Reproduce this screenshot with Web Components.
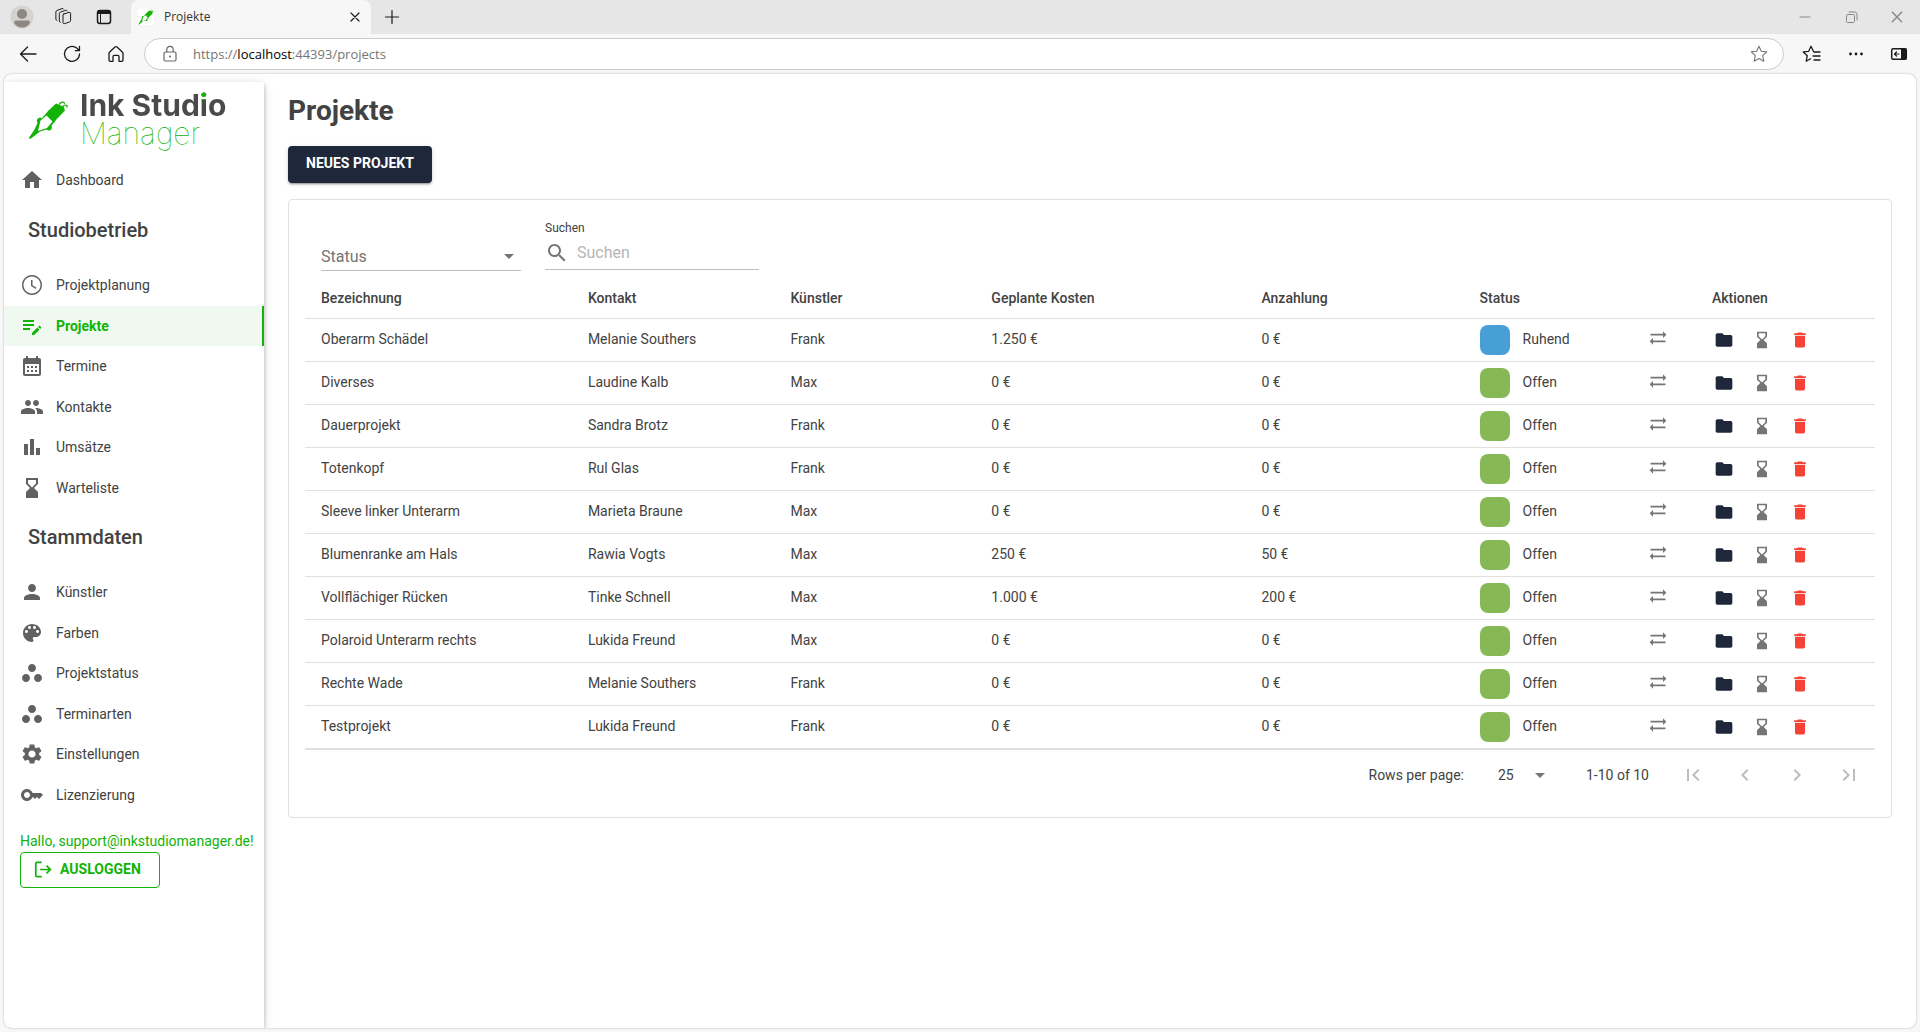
<!DOCTYPE html>
<html lang="de">
<head>
<meta charset="utf-8">
<title>Projekte</title>
<style>
html,body{margin:0;height:100%}
body{font-family:Roboto,"Liberation Sans",sans-serif;font-size:14px;line-height:20px;color:#424242;background:#f7f7f7}
</style>
</head>
<body>
<browser-window>
  <ink-sidebar slot="side"></ink-sidebar>
  <projects-page></projects-page>
</browser-window>
<script>
const BASE = `*{box-sizing:border-box}button,select,input{font:inherit;color:inherit;margin:0;padding:0;border:0;background:none;outline:0;border-radius:0;appearance:none}a{color:inherit;text-decoration:none}`;
function define(name, html, css) {
  const t = document.createElement('template');
  customElements.define(name, class extends HTMLElement {
    connectedCallback() {
      if (this.shadowRoot) return;
      const root = this.attachShadow({mode: 'open'});
      t.innerHTML = `<style>${BASE}${css}</style>${typeof html === 'function' ? html(this) : html}`;
      root.append(t.content.cloneNode(true));
    }
  });
}

/* ---------- icons ---------- */
const f = d => `<path fill="currentColor" d="${d}"/>`;
const s = (d, w = 1.2) => `<path fill="none" stroke="currentColor" stroke-width="${w}" stroke-linecap="round" stroke-linejoin="round" d="${d}"/>`;
const ICONS = {
  home: f('M10 20v-6h4v6h5v-8h3L12 3 2 12h3v8z'),
  clock: f('M11.99 2C6.47 2 2 6.48 2 12s4.47 10 9.99 10C17.52 22 22 17.52 22 12S17.52 2 11.99 2zM12 20.5c-4.7 0-8.5-3.8-8.5-8.5S7.3 3.5 12 3.5s8.5 3.8 8.5 8.5-3.8 8.5-8.5 8.5zM12.5 7H11v6l4.8 2.9.7-1.2-4-2.4z'),
  note: f('M3 10h11v2H3v-2zm0-2h11V6H3v2zm0 8h7v-2H3v2zm15.01-3.13.71-.71c.39-.39 1.02-.39 1.41 0l.71.71c.39.39.39 1.02 0 1.41l-.71.71-2.12-2.12zm-.71.71-5.3 5.3V21h2.12l5.3-5.3-2.12-2.12z'),
  calendar: f('M19 4h-1V2h-2v2H8V2H6v2H5c-1.11 0-1.99.9-1.99 2L3 20c0 1.1.89 2 2 2h14c1.1 0 2-.9 2-2V6c0-1.1-.9-2-2-2zm0 16H5V10h14v10zM9 14H7v-2h2v2zm4 0h-2v-2h2v2zm4 0h-2v-2h2v2zm-8 4H7v-2h2v2zm4 0h-2v-2h2v2zm4 0h-2v-2h2v2z'),
  people: f('M16 11c1.66 0 2.99-1.34 2.99-3S17.66 5 16 5s-3 1.34-3 3 1.34 3 3 3zm-8 0c1.66 0 2.99-1.34 2.99-3S9.66 5 8 5 5 6.34 5 8s1.34 3 3 3zm0 2c-2.33 0-7 1.17-7 3.5V19h14v-2.5c0-2.33-4.67-3.5-7-3.5zm8 0c-.29 0-.62.02-.97.05 1.16.84 1.97 1.97 1.97 3.45V19h6v-2.5c0-2.33-4.67-3.5-7-3.5z'),
  bars: f('M4 9h4v11H4zM10 4h4v16h-4zM16 13h4v7h-4z'),
  hourglass: f('M18 22l-.01-6L14 12l3.99-4.01L18 2H6v6l4 4-4 3.99V22h12zM8 7.5V4h8v3.5l-4 4-4-4z'),
  person: f('M12 12c2.21 0 4-1.79 4-4s-1.79-4-4-4-4 1.79-4 4 1.79 4 4 4zm0 2c-2.67 0-8 1.34-8 4v2h16v-2c0-2.66-5.33-4-8-4z'),
  palette: f('M12 3c-4.97 0-9 4.03-9 9s4.03 9 9 9c.83 0 1.5-.67 1.5-1.5 0-.39-.15-.74-.39-1.01-.23-.26-.38-.61-.38-.99 0-.83.67-1.5 1.5-1.5H16c2.76 0 5-2.24 5-5 0-4.42-4.03-8-9-8zm-5.5 9c-.83 0-1.5-.67-1.5-1.5S5.67 9 6.5 9 8 9.67 8 10.5 7.33 12 6.5 12zm3-4C8.67 8 8 7.33 8 6.5S8.67 5 9.5 5s1.5.67 1.5 1.5S10.33 8 9.5 8zm5 0c-.83 0-1.5-.67-1.5-1.5S13.67 5 14.5 5s1.5.67 1.5 1.5S15.33 8 14.5 8zm3 4c-.83 0-1.5-.67-1.5-1.5S16.67 9 17.5 9s1.5.67 1.5 1.5-.67 1.5-1.5 1.5z'),
  dots: f('M6 13c-2.2 0-4 1.8-4 4s1.8 4 4 4 4-1.8 4-4-1.8-4-4-4zm6-10C9.8 3 8 4.8 8 7s1.8 4 4 4 4-1.8 4-4-1.8-4-4-4zm6 10c-2.2 0-4 1.8-4 4s1.8 4 4 4 4-1.8 4-4-1.8-4-4-4z'),
  gear: f('M19.14 12.94c.04-.3.06-.61.06-.94 0-.32-.02-.64-.07-.94l2.03-1.58c.18-.14.23-.41.12-.61l-1.92-3.32c-.12-.22-.37-.29-.59-.22l-2.39.96c-.5-.38-1.03-.7-1.62-.94l-.36-2.54c-.04-.24-.24-.41-.48-.41h-3.84c-.24 0-.43.17-.47.41l-.36 2.54c-.59.24-1.13.57-1.62.94l-2.39-.96c-.22-.08-.47 0-.59.22L2.74 8.87c-.12.21-.08.47.12.61l2.03 1.58c-.05.3-.09.63-.09.94s.02.64.07.94l-2.03 1.58c-.18.14-.23.41-.12.61l1.92 3.32c.12.22.37.29.59.22l2.39-.96c.5.38 1.03.7 1.62.94l.36 2.54c.05.24.24.41.48.41h3.84c.24 0 .44-.17.47-.41l.36-2.54c.59-.24 1.13-.56 1.62-.94l2.39.96c.22.08.47 0 .59-.22l1.92-3.32c.12-.22.07-.47-.12-.61l-2.01-1.58zM12 15.6c-1.98 0-3.6-1.62-3.6-3.6s1.62-3.6 3.6-3.6 3.6 1.62 3.6 3.6-1.62 3.6-3.6 3.6z'),
  key: f('M21 10h-8.35C11.83 7.67 9.61 6 7 6c-3.31 0-6 2.69-6 6s2.69 6 6 6c2.61 0 4.83-1.67 5.65-4H13l2 2 2-2 2 2 4-4.04L21 10zM7 15c-1.65 0-3-1.35-3-3s1.35-3 3-3 3 1.35 3 3-1.35 3-3 3z'),
  logout: `<path fill="none" stroke="currentColor" stroke-width="2.2" d="M11 3H5Q3.5 3 3.5 4.5V19.5Q3.5 21 5 21H11M9 12H22M17 7l5 5-5 5"/>`,
  search: f('M15.5 14h-.79l-.28-.27C15.41 12.59 16 11.11 16 9.5 16 5.91 13.09 3 9.5 3S3 5.91 3 9.5 5.91 16 9.5 16c1.61 0 3.09-.59 4.23-1.57l.27.28v.79l5 4.99L20.49 19l-4.99-5zm-6 0C7.01 14 5 11.99 5 9.5S7.01 5 9.5 5 14 7.01 14 9.5 11.99 14 9.5 14z'),
  drop: f('M7 10l5 5 5-5z'),
  swap: f('M22 8l-4-4v3H3v2h15v3l4-4zM2 16l4 4v-3h15v-2H6v-3l-4 4z'),
  folder: f('M10 4H4c-1.1 0-1.99.9-1.99 2L2 18c0 1.1.9 2 2 2h16c1.1 0 2-.9 2-2V8c0-1.1-.9-2-2-2h-8l-2-2z'),
  trash: f('M6 19c0 1.1.9 2 2 2h8c1.1 0 2-.9 2-2V7H6v12zM19 4h-3.5l-1-1h-5l-1 1H5v2h14V4z'),
  first: f('M18.41 16.59L13.82 12l4.59-4.59L17 6l-6 6 6 6zM6 6h2v12H6z'),
  prev: f('M15.41 7.41L14 6l-6 6 6 6 1.41-1.41L10.83 12z'),
  next: f('M10 6L8.59 7.41 13.17 12l-4.58 4.59L10 18l6-6z'),
  last: f('M5.59 7.41L10.18 12l-4.59 4.59L7 18l6-6-6-6zM16 6h2v12h-2z'),
  /* window chrome, drawn on a 24 grid */
  avatar: '<circle cx="12" cy="12" r="11.5" fill="#d6d2ce"/><circle cx="12" cy="9" r="5" fill="#8c8782"/><path fill="#8c8782" d="M4 17.5Q4 15.5 6 15.5H18Q20 15.5 20 17.5C18.5 21 15.5 22.5 12 22.5S5.5 21 4 17.5z"/>',
  spaces: s('M12.8 9l5.2-1.6q1.6-.4 1.6 1v7.2q0 .9-.9 1.3l-4.9 1.7q-1.8.6-1.8-1V10q0-.7.8-1zM9.3 17.3q-1-.3-1-1.3V8.5q0-.9.9-1.3l5.4-1.9q1.4-.4 1.7.6M5.9 15.5q-1-.3-1-1.3V6.8q0-.9.9-1.3l5.2-1.9q1.2-.4 1.6.4', 1),
  tabs: '<rect x="5.5" y="5.5" width="13" height="13" rx="2.5" fill="none" stroke="currentColor" stroke-width="1.5"/><path d="M5.5 7q0-1.5 2-1.5h9q2 0 2 1.5v1.5H5.5zM8.5 9v9" fill="currentColor" stroke="currentColor" stroke-width="1"/>',
  x: s('M8 8l8 8M16 8l-8 8', 1.2),
  plus: s('M12 5.5v13M5.5 12h13', 1.2),
  min: s('M7 12h10', 1),
  restore: s('M8.5 9.5h6q1 0 1 1v6q0 1-1 1h-6q-1 0-1-1v-6q0-1 1-1zM10 7h5.5q2.5 0 2.5 2.5V15', 1),
  back: s('M20 12H4.5M11.5 5L4.5 12l7 7', 1.3),
  reload: s('M19.5 12a7.5 7.5 0 1 1-2.8-5.9L19.3 8.5M19.5 4.5v4.2h-4.2', 1.3),
  house: s('M5 11.5q0-1 .7-1.6L11 5q1-.8 2 0l5.3 4.9q.7.6.7 1.6V18q0 1.3-1.3 1.3H15V14.5q0-1.2-1.2-1.2h-3.6Q9 13.3 9 14.5v4.8H6.3Q5 19.3 5 18z', 1.3),
  lock: s('M7.5 10h9q1.5 0 1.5 1.5v6q0 1.5-1.5 1.5h-9Q6 19 6 17.5v-6Q6 10 7.5 10zM8.8 10V7.5a3.2 3.2 0 0 1 6.4 0V10', 1.2) + '<circle cx="12" cy="14.5" r="1" fill="currentColor"/>',
  star: s('M12 4.3l2.3 5 5.5.6-4.1 3.8 1.1 5.5-4.8-2.7-4.8 2.7 1.1-5.5L4.2 9.9l5.5-.6z', 1.1),
  favs: s('M13.5 9.5L11 4.3 8.7 9.3l-5.5.6 4.1 3.8-1.1 5.5 4.3-2.4M14 10h6M13 14h7M14 18h6', 1.3),
  more: '<g fill="currentColor"><circle cx="6.5" cy="12" r="1.4"/><circle cx="12" cy="12" r="1.4"/><circle cx="17.5" cy="12" r="1.4"/></g>',
  panel: '<rect x="4.7" y="6.7" width="14.6" height="10.6" rx="1.5" fill="none" stroke="currentColor" stroke-width="1.5"/><path fill="currentColor" d="M14 6.5h5.5v11H14z"/>' + s('M12 12H7.5M9.5 10L7.5 12l2 2', 1.2),
};
define('ui-icon', h => `<svg viewBox="0 0 24 24" aria-hidden="true">${ICONS[h.getAttribute('name')]}</svg>`,
  `:host{display:inline-flex;width:24px;height:24px;flex:none}svg{width:100%;height:100%;display:block}`);

define('tattoo-machine', `<svg viewBox="0 0 40 40" aria-hidden="true">
  <g fill="#11b306"><path d="M20 11L28 3.5 35.5 6.5 37 10.5 26.5 21.5z"/>
  <path fill-rule="evenodd" d="M20.5 10.5l7 10.5-4 4.5q1.2 3.5-1.3 4.7-2 .7-3.7-.8L12 31.500 3 38.500.5 38.500 6.500 29.500 9.500 23q-1.500-3.500 1-5 1.800-1 3.400.2zM18.500 15.500L12.500 20.500 10 31 19 28l5.500-6.500z"/></g>
  <path d="M31 4.500q3-4 6-1M34.500 7.500q1.500-3.500 4.500-2v2" fill="none" stroke="#11b306" stroke-width="1.300"/></svg>`,
  `:host{display:block;width:40px;height:40px;flex:none}svg{display:block;width:100%;height:100%}`);

/* ---------- browser window ---------- */
define('browser-window', `
  <div class="tabs">
    <button aria-label="Profil"><ui-icon name="avatar"></ui-icon></button>
    <button aria-label="Arbeitsbereiche"><ui-icon name="spaces"></ui-icon></button>
    <button aria-label="Tabaktionen"><ui-icon name="tabs"></ui-icon></button>
    <div class="tab"><tattoo-machine></tattoo-machine><span>Projekte</span><button aria-label="Tab schließen"><ui-icon name="x"></ui-icon></button></div>
    <button class="new" aria-label="Neuer Tab"><ui-icon name="plus"></ui-icon></button>
    <div class="win"><button aria-label="Minimieren"><ui-icon name="min"></ui-icon></button><button aria-label="Wiederherstellen"><ui-icon name="restore"></ui-icon></button><button aria-label="Schließen"><ui-icon name="x" class="big"></ui-icon></button></div>
  </div>
  <div class="bar">
    <button aria-label="Zurück"><ui-icon name="back"></ui-icon></button>
    <button aria-label="Aktualisieren"><ui-icon name="reload"></ui-icon></button>
    <button aria-label="Startseite"><ui-icon name="house"></ui-icon></button>
    <div class="url"><ui-icon name="lock"></ui-icon><div class="addr">https://<b>localhost</b>:44393/projects</div><button aria-label="Favorit"><ui-icon name="star"></ui-icon></button></div>
    <button aria-label="Favoriten"><ui-icon name="favs"></ui-icon></button>
    <button aria-label="Mehr"><ui-icon name="more"></ui-icon></button>
    <button aria-label="Seitenleiste"><ui-icon name="panel"></ui-icon></button>
  </div>
  <div class="page"><slot name="side"></slot><slot></slot></div>`, `
  :host{box-sizing:border-box;display:flex;flex-direction:column;height:100vh;min-height:900px;padding-bottom:4px}
  button{display:flex;justify-content:center;align-items:center;color:#1b1b1b}
  .tabs{display:flex;align-items:center;height:34px;background:#e6e6e6;font:12px/16px "Open Sans","Noto Sans",sans-serif;color:#333}
  .tabs>button{width:41px;height:34px}
  .tabs>button:first-child{margin-left:1px}
  .tab{display:flex;align-items:center;width:240px;height:34px;margin-left:7px;padding:0 4px 0 7px;background:#f7f7f7;border-radius:8px 8px 0 0}
  .tab tattoo-machine{width:16px;height:16px;background:#fff;margin-right:10px}
  .tab span{flex:1}
  .win{display:flex;margin-left:auto;color:#888}
  .win button{width:46px;height:34px;color:#888}
  .win .big{width:28px;height:28px}
  .bar{display:flex;align-items:center;height:40px;padding:0 1px 0 6px}
  .bar>button{width:44px;height:40px}
  .bar>button:last-child{width:41px}
  .url{flex:1;display:flex;align-items:center;height:32px;margin:0 6px;padding:0 12px 0 13px;background:#fff;border:1px solid #ccc;border-radius:16px;color:#666}
  .url button{color:#777}
  .addr{flex:1;margin-left:11px;font:13px/20px "Open Sans","Noto Sans",sans-serif;color:#757575}
  .addr b{font-weight:400;color:#000}
  .page{flex:1;display:flex;min-height:0;margin:0 4px;background:#fff;border-radius:8px;overflow:hidden;box-shadow:0 0 2px rgba(0,0,0,.3)}`);

/* ---------- sidebar ---------- */
define('nav-item', h => `<a href="#" ${h.hasAttribute('active') ? 'aria-current="page"' : ''}><ui-icon name="${h.getAttribute('icon')}"></ui-icon><span><slot></slot></span></a>`, `
  :host{display:block}
  a{display:flex;align-items:center;height:100%;padding-left:16px;gap:12px;color:#424242}
  ui-icon{color:#616161}
  a[aria-current]{background:#f0f9f0;color:#11b306;font-weight:700;box-shadow:inset -2px 0 #11b306}
  a[aria-current] ui-icon{color:#11b306}`);
define('ink-logo', `<tattoo-machine></tattoo-machine><div><div class="a">Ink Studio</div><div class="b">Manager</div></div>`, `
  :host{display:flex;gap:12px;padding:0 24px}
  tattoo-machine{margin-top:9px}
  .a,.b{font-family:Inter,Lato,sans-serif;font-size:30px;line-height:28px;white-space:nowrap}
  .a{width:max-content;font-weight:700;color:transparent;background:linear-gradient(#11b306,#11b306) 121px 0/8px 9px no-repeat,#4a4a4a;-webkit-background-clip:text;background-clip:text}
  .b{font-weight:100;color:#11b306}`);
define('ink-sidebar', `
  <ink-logo></ink-logo>
  <nav>
    <nav-item class="one" icon="home">Dashboard</nav-item>
    <h2>Studiobetrieb</h2>
    <div class="group">
      <nav-item icon="clock">Projektplanung</nav-item><nav-item icon="note" active>Projekte</nav-item>
      <nav-item icon="calendar">Termine</nav-item><nav-item icon="people">Kontakte</nav-item>
      <nav-item icon="bars">Umsätze</nav-item><nav-item icon="hourglass">Warteliste</nav-item>
    </div>
    <h2>Stammdaten</h2>
    <div class="group">
      <nav-item icon="person">Künstler</nav-item><nav-item icon="palette">Farben</nav-item>
      <nav-item icon="dots">Projektstatus</nav-item><nav-item icon="dots">Terminarten</nav-item>
      <nav-item icon="gear">Einstellungen</nav-item><nav-item icon="key">Lizenzierung</nav-item>
    </div>
  </nav>
  <div class="user"><p>Hallo, support@inkstudiomanager.de!</p><button><ui-icon name="logout"></ui-icon>AUSLOGGEN</button></div>`, `
  :host{display:block;flex:none;width:260px;margin-top:8px;padding-top:9px;background:#fff;box-shadow:0 2px 4px -1px rgba(0,0,0,.2),0 4px 5px rgba(0,0,0,.14),0 1px 10px rgba(0,0,0,.12)}
  ink-logo{height:60px}
  .one{height:40px;margin-top:9px}
  h2{height:64px;margin:0;padding:13px 24px 0;font-size:20px;line-height:32px;font-weight:500}
  .one+h2{height:65px;padding-top:14px}
  .group{display:grid;grid-auto-rows:1fr;height:243px}
  .user{padding:15px 0 0 16px;color:#11b306}
  .user p{margin:0;line-height:22px;white-space:nowrap}
  .user button{display:flex;align-items:center;gap:8px;height:36px;padding:0 18px 2px 12px;border:1px solid #11b306;border-radius:4px;font-weight:700}
  .user ui-icon{width:19px;height:19px}`);

/* ---------- projects page ---------- */
const ROWS = [
  ['Oberarm Schädel','Melanie Southers','Frank','1.250 €','0 €','Ruhend'],
  ['Diverses','Laudine Kalb','Max','0 €','0 €','Offen'],
  ['Dauerprojekt','Sandra Brotz','Frank','0 €','0 €','Offen'],
  ['Totenkopf','Rul Glas','Frank','0 €','0 €','Offen'],
  ['Sleeve linker Unterarm','Marieta Braune','Max','0 €','0 €','Offen'],
  ['Blumenranke am Hals','Rawia Vogts','Max','250 €','50 €','Offen'],
  ['Vollflächiger Rücken','Tinke Schnell','Max','1.000 €','200 €','Offen'],
  ['Polaroid Unterarm rechts','Lukida Freund','Max','0 €','0 €','Offen'],
  ['Rechte Wade','Melanie Southers','Frank','0 €','0 €','Offen'],
  ['Testprojekt','Lukida Freund','Frank','0 €','0 €','Offen'],
];
define('project-table', () => `<table>
  <colgroup><col style="width:17%"><col style="width:12.9%"><col style="width:12.8%"><col style="width:17.2%"><col style="width:13.9%"><col style="width:14.8%"><col></colgroup>
  <thead><tr>${['Bezeichnung','Kontakt','Künstler','Geplante Kosten','Anzahlung','Status','Aktionen'].map(t => `<th>${t}</th>`).join('')}</tr></thead>
  <tbody>${ROWS.map(r => `<tr>${r.slice(0, 5).map(t => `<td>${t}</td>`).join('')}
    <td class="st"><div><i class="${r[5]}"></i><span>${r[5]}</span><button aria-label="Status wechseln"><ui-icon name="swap"></ui-icon></button></div></td>
    <td class="act"><div><button aria-label="Öffnen"><ui-icon name="folder"></ui-icon></button><button class="w" aria-label="Warteliste"><ui-icon name="hourglass"></ui-icon></button><button class="d" aria-label="Löschen"><ui-icon name="trash"></ui-icon></button></div></td></tr>`).join('')}</tbody></table>`, `
  :host{display:block}
  table{width:100%;table-layout:fixed;border-collapse:separate;border-spacing:0}
  th,td{height:43px;padding:0 16px 2px;text-align:left;border-bottom:1px solid #e0e0e0;white-space:nowrap}
  th{font-weight:500;padding:2px 16px 0}
  .st,.act{padding-bottom:0}
  .st div,.act div{display:flex;align-items:center}
  i{width:30px;height:30px;border-radius:8px;background:#86b956}
  i.Ruhend{background:#489fd5}
  span{flex:1;margin-left:13px;padding-bottom:2px}
  ui-icon{width:20px;height:20px}
  button{display:flex}
  .st button{padding:0 12px 4px;color:#757575}
  .act div{gap:18px;padding-left:2px;color:#1f283b}
  .w{color:#757575}.d{color:#f44336}`);

define('table-pager', `
  <label for="n">Rows per page:</label>
  <div class="sel"><select id="n"><option>25</option></select><ui-icon name="drop"></ui-icon></div>
  <p>1-10 of 10</p>
  <div class="nav"><button disabled aria-label="Erste Seite"><ui-icon name="first"></ui-icon></button><button disabled aria-label="Vorige Seite"><ui-icon name="prev"></ui-icon></button><button disabled aria-label="Nächste Seite"><ui-icon name="next"></ui-icon></button><button disabled aria-label="Letzte Seite"><ui-icon name="last"></ui-icon></button></div>`, `
  :host{box-sizing:border-box;display:flex;align-items:center;justify-content:flex-end;height:52px;padding-bottom:2px;border-top:1px solid #e0e0e0}
  .sel{display:grid;width:54px;margin:0 34px;align-items:center}
  .sel>*{grid-area:1/1}.sel ui-icon{justify-self:end;color:#757575;pointer-events:none}
  p{margin:0 20px 0 0}
  select{width:100%;height:24px}
  .nav{display:flex;gap:4px;padding-right:2px}
  .nav button{display:flex;padding:12px;color:#bdbdbd}`);

define('projects-page', `
  <h1>Projekte</h1>
  <button class="new">NEUES PROJEKT</button>
  <section>
    <div class="filters">
      <div class="sel"><select aria-label="Status"><option>Status</option></select><ui-icon name="drop"></ui-icon></div>
      <div class="find"><label for="q">Suchen</label><div><ui-icon name="search"></ui-icon><input id="q" type="text" placeholder="Suchen"></div></div>
    </div>
    <project-table></project-table>
    <table-pager></table-pager>
  </section>`, `
  :host{display:block;flex:1;min-width:0;padding:19px 24px 0}
  h1{margin:0;font-size:28px;line-height:36px;font-weight:700}
  .new{display:block;height:37px;margin:17px 0 16px;padding:0 18px 4px;border-radius:4px;background:#1f283b;color:#fff;font-weight:700;box-shadow:0 3px 1px -2px rgba(0,0,0,.2),0 2px 2px rgba(0,0,0,.14),0 1px 5px rgba(0,0,0,.12)}
  section{border:1px solid #e0e0e0;border-radius:4px;padding:16px}
  .filters{display:flex;align-items:flex-end;gap:24px;padding:4px 16px 5px}
  .sel{display:grid;width:200px;border-bottom:1px solid #bdbdbd;align-items:center;font-size:16px;color:#757575}
  .sel>*{grid-area:1/1}.sel select{height:28px;padding-top:2px}.sel ui-icon{justify-self:end;pointer-events:none}
  .find{width:214px;padding-bottom:1px}
  .find label{display:block;font-size:12px;line-height:16px}
  .find div{display:flex;align-items:center;gap:8px;height:34px;border-bottom:1px solid #bdbdbd;color:#757575}
  .find input{flex:1;min-width:0;font-size:16px}
  .find input::placeholder{color:#b5b5b5;opacity:1}`);
</script>
</body>
</html>
